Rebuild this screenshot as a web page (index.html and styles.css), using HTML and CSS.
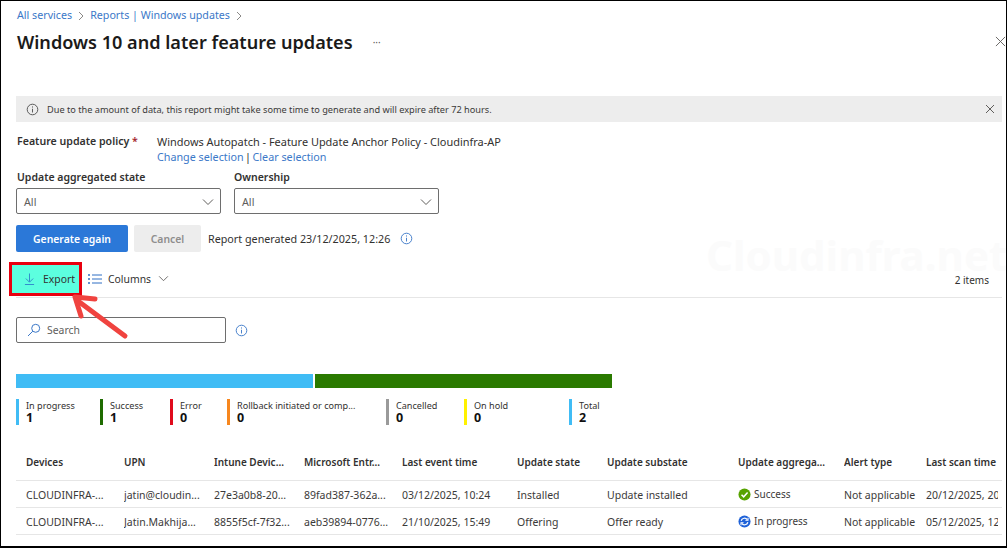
FILE: index.html
```html
<!DOCTYPE html>
<html lang="en">
<head>
<meta charset="utf-8">
<title>Windows 10 and later feature updates</title>
<link rel="stylesheet" href="styles.css">
</head>
<body>
<div class="frame">
  <nav class="crumbs">
    <a>All services</a>
    <svg class="crumb-sep" viewBox="0 0 6 10"><path d="M1 1l4 4-4 4"/></svg>
    <a>Reports | Windows updates</a>
    <svg class="crumb-sep" viewBox="0 0 6 10"><path d="M1 1l4 4-4 4"/></svg>
  </nav>
  <header class="head">
    <h1>Windows 10 and later feature updates</h1>
    <span class="more">···</span>
    <svg class="close-main" viewBox="0 0 12 12"><path d="M1 1l10 10M11 1L1 11"/></svg>
  </header>

  <div class="banner">
    <svg class="ico-info grey" viewBox="0 0 14 14"><circle cx="7" cy="7" r="5.7"/><path d="M7 6.2v4M7 3.7v1.2"/></svg>
    <span class="banner-text">Due to the amount of data, this report might take some time to generate and will expire after 72 hours.</span>
    <svg class="close-banner" viewBox="0 0 10 10"><path d="M1 1l8 8M9 1L1 9"/></svg>
  </div>

  <div class="policy">
    <div class="policy-label">Feature update policy <span class="req">*</span></div>
    <div class="policy-value">
      <div>Windows Autopatch - Feature Update Anchor Policy - Cloudinfra-AP</div>
      <div class="policy-links"><a>Change selection</a><span class="pipe">|</span><a>Clear selection</a></div>
    </div>
  </div>

  <div class="filters">
    <div class="filter">
      <label>Update aggregated state</label>
      <div class="select"><span>All</span><svg viewBox="0 0 12 8"><path d="M1 1.5l5 5 5-5"/></svg></div>
    </div>
    <div class="filter">
      <label>Ownership</label>
      <div class="select"><span>All</span><svg viewBox="0 0 12 8"><path d="M1 1.5l5 5 5-5"/></svg></div>
    </div>
  </div>

  <div class="actions">
    <button class="btn primary">Generate again</button>
    <button class="btn disabled">Cancel</button>
    <span class="generated">Report generated 23/12/2025, 12:26</span>
    <svg class="ico-info blue" viewBox="0 0 14 14"><circle cx="7" cy="7" r="5.7"/><path d="M7 6.2v4M7 3.7v1.2"/></svg>
  </div>

  <div class="toolbar">
    <div class="export">
      <svg class="ico-export" viewBox="0 0 12 14"><path d="M6 1v9M2 6.5L6 10.5l4-4M1 13h10"/></svg>
      <span>Export</span>
    </div>
    <div class="columns">
      <svg class="ico-cols" viewBox="0 0 14 10"><path class="dash" d="M0 1h2M0 5h2M0 9h2"/><path d="M4 1h10M4 5h10M4 9h10"/></svg>
      <span>Columns</span>
      <svg class="ico-chev" viewBox="0 0 12 8"><path d="M1 1.5l5 5 5-5"/></svg>
    </div>
    <span class="count">2 items</span>
  </div>

  <div class="search-row">
    <div class="search">
      <svg viewBox="0 0 14 14"><circle cx="8.7" cy="5.3" r="4"/><path d="M5.8 8.2L1 13"/></svg>
      <span>Search</span>
    </div>
    <svg class="ico-info blue" viewBox="0 0 14 14"><circle cx="7" cy="7" r="5.7"/><path d="M7 6.2v4M7 3.7v1.2"/></svg>
  </div>

  <div class="bar"><i class="seg sky"></i><i class="seg green"></i></div>

  <div class="legend">
    <div class="stat c-sky"><span>In progress</span><b>1</b></div>
    <div class="stat c-green"><span>Success</span><b>1</b></div>
    <div class="stat c-red"><span>Error</span><b>0</b></div>
    <div class="stat c-orange"><span>Rollback initiated or comp...</span><b>0</b></div>
    <div class="stat c-grey"><span>Cancelled</span><b>0</b></div>
    <div class="stat c-yellow"><span>On hold</span><b>0</b></div>
    <div class="stat c-sky"><span>Total</span><b>2</b></div>
  </div>

  <div class="table">
    <div class="row th">
      <span>Devices</span><span>UPN</span><span>Intune Devic...</span><span>Microsoft Entr...</span><span>Last event time</span><span>Update state</span><span>Update substate</span><span>Update aggrega...</span><span>Alert type</span><span>Last scan time</span>
    </div>
    <div class="row">
      <span>CLOUDINFRA-...</span><span>jatin@cloudin...</span><span>27e3a0b8-20...</span><span>89fad387-362a...</span><span>03/12/2025, 10:24</span><span>Installed</span><span>Update installed</span>
      <span class="state"><svg viewBox="0 0 14 14"><circle cx="7" cy="7" r="6.5" fill="#57a300"/><path d="M3.8 7.2l2.3 2.3 4.2-4.6" fill="none" stroke="#fff" stroke-width="1.6"/></svg>Success</span>
      <span class="clip">Not applicable</span><span class="clip">20/12/2025, 20</span>
    </div>
    <div class="row">
      <span>CLOUDINFRA-...</span><span>Jatin.Makhija...</span><span>8855f5cf-7f32...</span><span>aeb39894-0776...</span><span>21/10/2025, 15:49</span><span>Offering</span><span>Offer ready</span>
      <span class="state"><svg viewBox="0 0 14 14"><circle cx="7" cy="7" r="6.5" fill="#1f62d8"/><path d="M3.4 6.2A3.7 3.7 0 0 1 10 5M10.6 7.8A3.7 3.7 0 0 1 4 9" fill="none" stroke="#fff" stroke-width="1.3"/><path d="M10.8 2.9v2.8H8M3.2 11.1V8.3H6" fill="none" stroke="#fff" stroke-width="1.1"/></svg>In progress</span>
      <span class="clip">Not applicable</span><span class="clip">05/12/2025, 12</span>
    </div>
  </div>

  <div class="watermark">Cloudinfra.net</div>
  <svg class="arrow" viewBox="0 0 70 60"><path d="M57 47L10 12"/><path d="M13 27L7 8l20 2"/></svg>
</div>
</body>
</html>
```
FILE: styles.css
```css
* { box-sizing: border-box; }
html, body { margin: 0; padding: 0; height: 100%; background: #fff; }
body { font-family: "Noto Sans", "Open Sans", sans-serif; color: #323130; font-size: 10.75px; overflow: hidden; }
svg { display: block; flex: none; fill: none; stroke: currentColor; }
.frame { position: relative; width: 1007px; height: 548px; border: 1px solid #000; border-bottom-width: 2px; padding: 0 4px 0 15px; overflow: hidden; }

.crumbs { display: flex; align-items: center; height: 13px; margin-top: 8px; padding-left: 1px; gap: 6px; color: #3b78c8; font-size: 10.7px; line-height: 13px; }
.crumb-sep { width: 6px; height: 10px; color: #8a8886; stroke-width: 1; }

.head { display: flex; align-items: center; height: 26px; margin-top: 7px; padding-left: 1px; position: relative; }
h1 { margin: 0; font-size: 18.1px; font-weight: 600; color: #1b1a19; line-height: 26px; white-space: nowrap; }
.more { margin-left: 20px; font-size: 10px; color: #605e5c; }
.close-main { position: absolute; right: -4px; top: 7px; width: 11px; height: 11px; color: #605e5c; stroke-width: 1; }

.banner { display: flex; align-items: center; height: 26px; margin-top: 41px; background: #ededed; padding: 0 7px 0 10px; font-size: 9.2px; }
.banner-text { margin-left: 8px; flex: 1; color: #3b3a39; }
.close-banner { width: 10px; height: 10px; color: #605e5c; stroke-width: 1; }
.ico-info { width: 13px; height: 13px; stroke-width: 1; }
.ico-info.grey { color: #505050; }
.ico-info.blue { color: #3b78c8; }

.policy { display: flex; margin-top: 12px; line-height: 15px; font-size: 10.95px; }
.policy-label { width: 141px; padding-left: 1px; font-size: 10.6px; font-weight: 600; white-space: nowrap; }
.req { color: #a4262c; }
.policy-links { font-size: 10.75px; padding-top: 1px; margin-bottom: -1px; }
.policy-links a { color: #3b78c8; }
.pipe { color: #323130; margin: 0 1.5px; }

.filters { display: flex; gap: 13px; margin-top: 5px; }
.filter { width: 205px; }
.filter label { display: block; font-size: 10.5px; font-weight: 600; line-height: 16px; margin-bottom: 3px; }
.filter:first-child label { padding-left: 1px; }
.select { display: flex; justify-content: space-between; align-items: center; height: 26px; border: 1px solid #6e6e6e; border-radius: 2px; padding: 1px 6px 0 7px; color: #605e5c; }
.select svg { width: 12px; height: 8px; color: #605e5c; stroke-width: 1; }

.actions { display: flex; align-items: center; margin-top: 11px; height: 27px; }
.btn { height: 27px; border: 0; border-radius: 2px; font: 600 10.4px "Noto Sans", sans-serif; padding: 0; }
.primary { width: 112px; background: #2b78d8; color: #fff; }
.disabled { width: 67px; margin-left: 6px; background: #ededed; color: #8f8e8d; }
.generated { margin-left: 7px; }
.actions .ico-info { margin-left: 10px; }

.toolbar { display: flex; align-items: center; height: 36px; margin-top: 10px; border-bottom: 1px solid #e6e6e6; position: relative; }
.export { display: flex; align-items: center; align-self: flex-start; width: 73px; height: 34px; margin-left: -7px; background: #5cffdf; border: 3px solid #e8000f; padding-left: 12px; font-size: 10.4px; }
.ico-export { width: 11px; height: 14px; color: #2f83c9; stroke-width: 1; margin-right: 8px; }
.columns { display: flex; align-items: center; margin-left: 6px; margin-bottom: 2px; font-size: 10.4px; }
.ico-cols { width: 14px; height: 10px; color: #2f6fc4; stroke-width: 1; margin-right: 6px; }
.ico-cols .dash { stroke-width: 1.6; }
.ico-chev { width: 11px; height: 7px; margin-left: 7px; color: #605e5c; stroke-width: 1; }
.count { margin-left: auto; margin-right: 13px; font-size: 10px; }

.search-row { display: flex; align-items: center; margin-top: 19px; gap: 9px; }
.search { display: flex; align-items: center; width: 210px; height: 26px; border: 1px solid #6e6e6e; border-radius: 2px; padding-left: 10px; color: #605e5c; font-size: 10.4px; }
.search svg { width: 14px; height: 14px; color: #3b78c8; stroke-width: 1; margin-right: 6px; }

.bar { display: flex; gap: 2px; width: 596px; height: 14px; margin-top: 31px; }
.seg { flex: 1; display: block; }
.sky { background: #40bcf5; }
.green { background: #2a7a00; }

.legend { display: grid; grid-template-columns: 84px 70px 57px 159px 78px 105px 60px; margin-top: 11px; }
.stat { height: 26px; border-left: 3px solid; padding-left: 7px; display: flex; flex-direction: column; }
.stat span { font-size: 9.1px; line-height: 13px; white-space: nowrap; }
.stat b { font-size: 12.5px; line-height: 12px; color: #111; font-weight: 700; }
.c-sky { border-color: #40bcf5; }
.c-green { border-color: #1e6b00; }
.c-red { border-color: #e00b1c; }
.c-orange { border-color: #f7871e; }
.c-grey { border-color: #9a9a9a; }
.c-yellow { border-color: #fff100; }

.table { margin-top: 23px; }
.row { display: grid; grid-template-columns: 98px 90px 90px 98px 115px 90px 131px 106px 82px 76px; height: 27px; padding: 2px 0 0 10px; align-items: center; border-bottom: 1px solid #e6e6e6; font-size: 10.5px; }
.row > span { white-space: nowrap; overflow: hidden; color: #3b3a39; }
.row.th { height: 33px; padding: 0 0 4px 10px; font-size: 10px; }
.row.th > span { font-weight: 600; color: #323130; }
.row > .clip { width: 72px; }
.row > .state { display: flex; align-items: center; gap: 3px; font-size: 10px; margin-top: -2px; }
.state svg { width: 13px; height: 13px; stroke: none; }

.watermark { position: absolute; left: 705px; top: 225px; font-size: 42px; font-weight: 700; color: #fbfbfb; white-space: nowrap; pointer-events: none; }
.arrow { position: absolute; left: 67px; top: 288px; width: 70px; height: 60px; color: #f0433f; stroke-width: 5; stroke-linecap: round; stroke-linejoin: round; }
```
